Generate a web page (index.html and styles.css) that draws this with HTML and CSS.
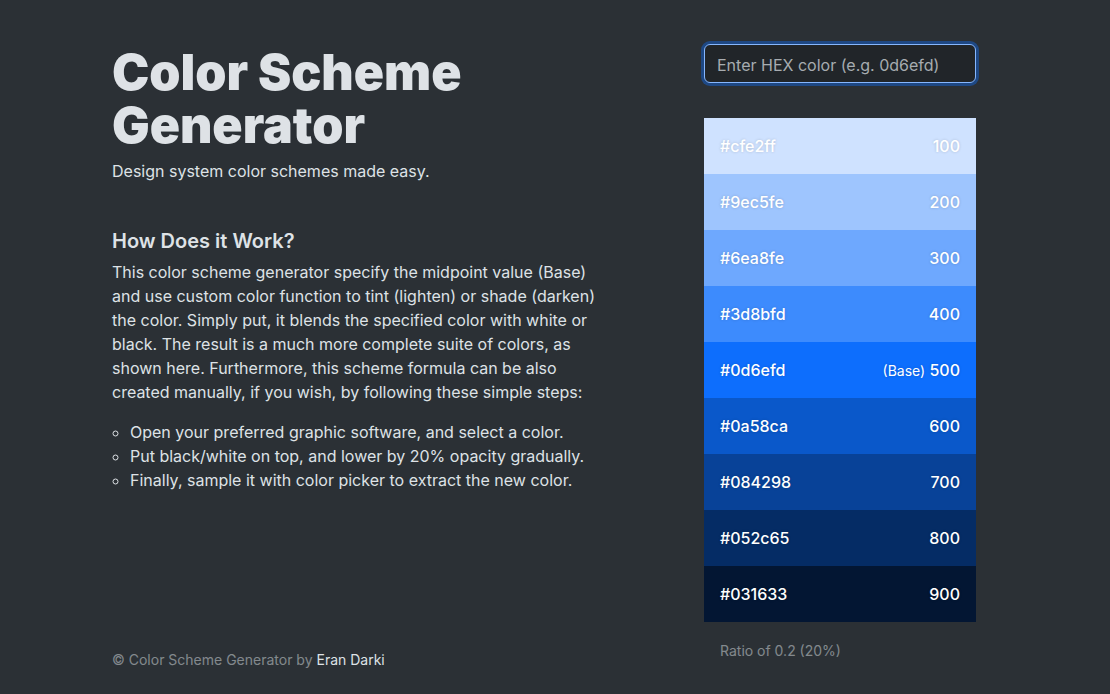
FILE: index.html
```html
<!DOCTYPE html>
<html lang="en">
<head>
<meta charset="utf-8">
<title>Color Scheme Generator</title>
<link rel="stylesheet" href="styles.css">
</head>
<body>
<main class="page">
  <section class="intro">
    <h1 class="title">Color Scheme Generator</h1>
    <p class="lead">Design system color schemes made easy.</p>
    <h2 class="subtitle">How Does it Work?</h2>
    <p class="body">This color scheme generator specify the midpoint value (Base) and use custom color function to tint (lighten) or shade (darken) the color. Simply put, it blends the specified color with white or black. The result is a much more complete suite of colors, as shown here. Furthermore, this scheme formula can be also created manually, if you wish, by following these simple steps:</p>
    <ul class="steps">
      <li>Open your preferred graphic software, and select a color.</li>
      <li>Put black/white on top, and lower by 20% opacity gradually.</li>
      <li>Finally, sample it with color picker to extract the new color.</li>
    </ul>
    <footer class="footer">© Color Scheme Generator by <span class="author">Eran Darki</span></footer>
  </section>
  <section class="tool">
    <input class="hex-input" type="text" placeholder="Enter HEX color (e.g. 0d6efd)">
    <div class="swatches">
      <div class="swatch s100"><span>#cfe2ff</span><span>100</span></div>
      <div class="swatch s200"><span>#9ec5fe</span><span>200</span></div>
      <div class="swatch s300"><span>#6ea8fe</span><span>300</span></div>
      <div class="swatch s400"><span>#3d8bfd</span><span>400</span></div>
      <div class="swatch s500"><span>#0d6efd</span><span><small class="base">(Base)</small> 500</span></div>
      <div class="swatch s600"><span>#0a58ca</span><span>600</span></div>
      <div class="swatch s700"><span>#084298</span><span>700</span></div>
      <div class="swatch s800"><span>#052c65</span><span>800</span></div>
      <div class="swatch s900"><span>#031633</span><span>900</span></div>
    </div>
    <p class="ratio">Ratio of 0.2 (20%)</p>
  </section>
</main>
</body>
</html>
```

FILE: styles.css
```css
* { box-sizing: border-box; }
html, body { margin: 0; padding: 0; }
body {
  background: #2b3035;
  color: #dee2e6;
  font-family: Inter, "Noto Sans", sans-serif;
  font-size: 16px;
  line-height: 1.5;
  height: 694px;
  overflow: hidden;
}
.page {
  display: flex;
  align-items: flex-start;
  gap: 104px;
  height: 694px;
  padding: 44px 0 0 112px;
}
.intro {
  width: 488px;
  align-self: stretch;
  display: flex;
  flex-direction: column;
}
.title {
  margin: 2px 0 0;
  font-size: 50px;
  font-weight: 900;
  line-height: 53px;
  letter-spacing: -0.05px;
  width: 380px;
}
.lead {
  margin: 7px 0 0;
}
.subtitle {
  margin: 46px 0 0;
  font-size: 20px;
  font-weight: 600;
  line-height: 1.2;
}
.body {
  margin: 7px 0 0;
}
.steps {
  margin: 16px 0 0;
  padding-left: 18px;
  list-style: circle;
}
.footer {
  margin-top: auto;
  font-size: 14px;
  color: rgba(222, 226, 230, 0.5);
  padding-bottom: 24px;
}
.author { color: #dee2e6; }
.tool {
  width: 272px;
  display: flex;
  flex-direction: column;
}
.hex-input {
  display: block;
  width: 100%;
  height: 39px;
  padding: 8px 12px 5px;
  font-family: inherit;
  font-size: 16px;
  color: #dee2e6;
  background: #212529;
  border: 1px solid #86b7fe;
  border-radius: 6px;
  box-shadow: 0 0 0 3px rgba(13, 110, 253, 0.4);
  outline: none;
}
.hex-input::placeholder { color: rgba(222, 226, 230, 0.72); }
.swatches {
  margin-top: 35px;
  display: flex;
  flex-direction: column;
}
.swatch {
  height: 56px;
  display: flex;
  justify-content: space-between;
  align-items: center;
  padding: 0 16px;
  color: #fff;
  font-weight: 500;
  text-shadow: 0 0 3px rgba(0, 0, 0, 0.18);
}
.base { font-size: 14px; font-weight: 400; }
.s100 { background: #cfe2ff; }
.s200 { background: #9ec5fe; }
.s300 { background: #6ea8fe; }
.s400 { background: #3d8bfd; }
.s500 { background: #0d6efd; }
.s600 { background: #0a58ca; }
.s700 { background: #084298; }
.s800 { background: #052c65; }
.s900 { background: #031633; }
.ratio {
  margin: 18px 0 0 16px;
  font-size: 14px;
  color: rgba(222, 226, 230, 0.5);
}
```
